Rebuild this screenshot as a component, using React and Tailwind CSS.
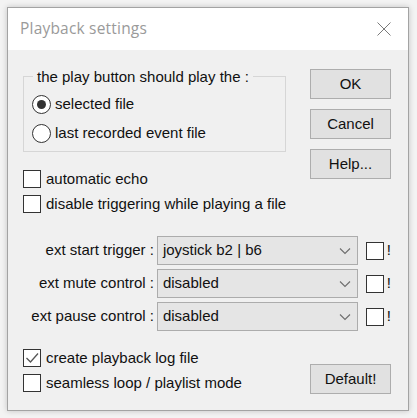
import React from "react";

const F = { fontFamily: '"Liberation Sans", Arial, sans-serif' };

function Check({ checked }) {
  return (
    <span className="w-[18px] h-[18px] border border-[#333] bg-white flex items-center justify-center shrink-0">
      {checked && (
        <svg width="16" height="16" viewBox="0 0 16 16">
          <polyline points="2.5,8 6.5,12 14,3.5" fill="none" stroke="#555" strokeWidth="1.3" />
        </svg>
      )}
    </span>
  );
}

function Radio({ checked }) {
  return (
    <span className="w-[19px] h-[19px] rounded-full border border-[#333] bg-white flex items-center justify-center shrink-0">
      {checked && <span className="w-[9px] h-[9px] rounded-full bg-[#333]" />}
    </span>
  );
}

function Btn({ children, className = "" }) {
  return (
    <div className={"h-[30px] w-[81px] bg-[#e1e1e1] border border-[#adadad] flex items-center justify-center text-[15px] text-[#111] " + className}>
      {children}
    </div>
  );
}

function CheckRow({ checked, label }) {
  return (
    <div className="flex items-center gap-[5px] h-[18px] text-[15px] text-[#111] whitespace-nowrap">
      <Check checked={checked} />
      <span>{label}</span>
    </div>
  );
}

function SelectRow({ label, value }) {
  return (
    <div className="flex items-center h-[29px] text-[15px] text-[#111]">
      <span className="w-[131px] text-right whitespace-nowrap">{label}</span>
      <div className="ml-[3px] w-[201px] h-[29px] bg-[#e5e5e5] border border-[#acacac] flex items-center justify-between pl-[5px] pr-[6px]">
        <span>{value}</span>
        <svg width="12" height="8" viewBox="0 0 12 8">
          <polyline points="1,1.5 6,6.5 11,1.5" fill="none" stroke="#6d6d6d" strokeWidth="1.1" />
        </svg>
      </div>
      <span className="ml-[8px]"><Check /></span>
      <span className="ml-[3px] text-[#111]">!</span>
    </div>
  );
}

export default function App() {
  return (
    <div className="w-[417px] h-[418px] bg-[#f3f3f3] relative" style={F}>
      <div className="absolute left-[7px] top-[7px] w-[402px] h-[404px] border border-[#a3a3a3] bg-[#f0f0f0] shadow-[0_0_6px_rgba(0,0,0,0.2)] flex flex-col">
        <div className="h-[42px] bg-white flex items-center justify-between pl-[12px] pr-[16px]">
          <span className="text-[15.5px] text-[#9a9a9a] tracking-[0.2px]" style={{ fontFamily: '"Open Sans", "Noto Sans", sans-serif' }}>Playback settings</span>
          <svg width="16" height="16" viewBox="0 0 16 16">
            <path d="M1.5 1.5 L14.5 14.5 M14.5 1.5 L1.5 14.5" stroke="#7a7a7a" strokeWidth="1" fill="none" />
          </svg>
        </div>
        <div className="flex-1 pl-[15px] pr-[17px] pt-[18px]">
          <div className="flex justify-between items-start">
            <div className="w-[263px] flex flex-col">
              <fieldset className="border border-[#d6d6d6] pl-[8px] pt-[9px] pb-[8px] flex flex-col gap-[9px]">
                <legend className="px-[4px] ml-[1px] text-[15px] leading-[17px] text-[#111]">the play button should play the :</legend>
                <div className="flex items-center gap-[4px] h-[20px] text-[15px] text-[#111]">
                  <Radio checked />
                  <span>selected file</span>
                </div>
                <div className="flex items-center gap-[4px] h-[20px] text-[15px] text-[#111]">
                  <Radio />
                  <span>last recorded event file</span>
                </div>
              </fieldset>
              <div className="mt-[18px] flex flex-col gap-[7px]">
                <CheckRow label="automatic echo" />
                <CheckRow label="disable triggering while playing a file" />
              </div>
            </div>
            <div className="flex flex-col gap-[10px] mt-[1px]">
              <Btn>OK</Btn>
              <Btn>Cancel</Btn>
              <Btn>Help...</Btn>
            </div>
          </div>
          <div className="mt-[23px] flex flex-col gap-[4px]">
            <SelectRow label="ext start trigger :" value="joystick b2 | b6" />
            <SelectRow label="ext mute control :" value="disabled" />
            <SelectRow label="ext pause control :" value="disabled" />
          </div>
          <div className="mt-[18px] flex justify-between items-start">
            <div className="flex flex-col gap-[7px]">
              <CheckRow checked label="create playback log file" />
              <CheckRow label="seamless loop / playlist mode" />
            </div>
            <Btn className="mt-[15px]">Default!</Btn>
          </div>
        </div>
      </div>
    </div>
  );
}
